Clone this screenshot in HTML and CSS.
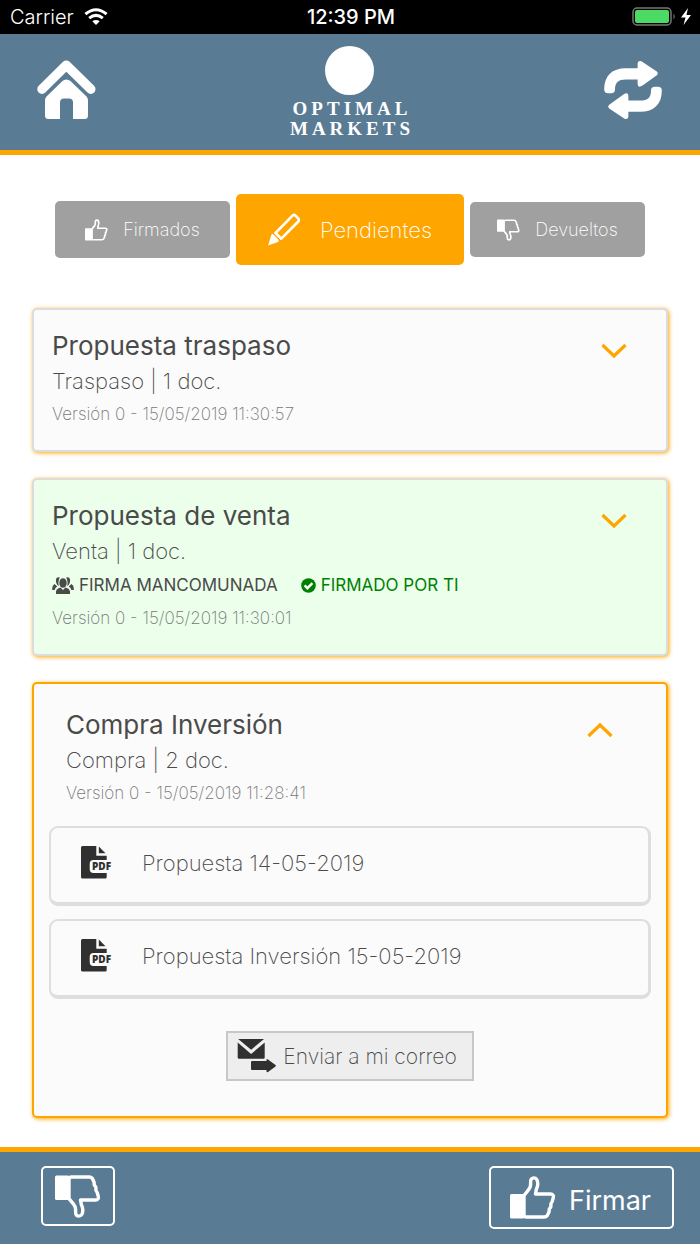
FILE: index.html
```
<!DOCTYPE html>
<html lang="es">
<head>
  <meta charset="UTF-8">
  <meta name="viewport" content="width=device-width, initial-scale=1">
  <title>Optimal Markets</title>
  <link rel="stylesheet" href="styles.css">
</head>
<body>
  <svg class="sprite" aria-hidden="true">
    <symbol id="thumb" viewBox="0 0 46 43">
      <rect x="0" y="18" width="14.5" height="24.5" rx="1.5" fill="currentColor"/>
      <path d="M14 19.5 C16 16.5 19.5 13.5 20.3 10.5 C21 7.5 20.2 5 21 3.5 C22 1.3 25.5 1.3 26.8 3.5 C28.6 7 28 10 26.3 13.5 L25.5 18 H40.5 C43 18 43.9 19.8 43.3 21.5 L42.2 25.5 L41 27.5 L40.8 31 L39.3 33 L39 36 L37.8 38.5 C37.2 40.3 36 41 34 41 H16.5 C15 41 14 40 14 38.5 Z" fill="none" stroke="currentColor" stroke-width="3.4" stroke-linejoin="round"/>
    </symbol>
    <symbol id="chevron" viewBox="0 0 26 16">
      <path d="M1.5 2 L13 13 L24.5 2" fill="none" stroke="currentColor" stroke-width="3.2"/>
    </symbol>
    <symbol id="file" viewBox="0 0 32 33">
      <path d="M1.5 0 H15.3 V9.7 H25.7 V14 H12.5 Q8.7 14 8.7 18 V23 Q8.7 27 12.5 27 H25.7 V31 Q25.7 32.5 24.2 32.5 H1.5 Q0 32.5 0 31 V1.5 Q0 0 1.5 0 Z" fill="currentColor"/>
      <path d="M17.8 0.5 L24.5 7.2 H17.8 Z" fill="currentColor"/>
    </symbol>
  </svg>

  <div class="statusbar">
    <div class="carrier">
      <span>Carrier</span>
      <svg width="24" height="18" viewBox="0 0 24 18" fill="none" stroke="currentColor">
        <path d="M1.4 6.2 Q12 -2.6 22.6 6.2" stroke-width="3"/>
        <path d="M5.2 10.2 Q12 4.6 18.8 10.2" stroke-width="3"/>
        <path d="M12 17 L8.3 13.3 Q12 10.6 15.7 13.3 Z" fill="currentColor" stroke="none"/>
      </svg>
    </div>
    <span class="time">12:39 PM</span>
    <div class="battery">
      <svg width="60" height="20" viewBox="0 0 60 20">
        <rect x="1" y="1" width="38" height="17" rx="4" fill="none" stroke="#777" stroke-width="1.5"/>
        <rect x="3" y="3" width="34" height="13" rx="2" fill="#4cd964"/>
        <path d="M41.5 6.5 Q44 9.5 41.5 12.5 Z" fill="#777"/>
        <path d="M56 1 L49 10.5 H53.5 L51.5 18 L59 8 H54.5 Z" fill="#fff"/>
      </svg>
    </div>
  </div>

  <header class="topbar">
    <button class="icon-btn" aria-label="Inicio">
      <svg width="60" height="60" viewBox="0 0 60 60">
        <path d="M5 29.2 L29.3 5.2 L53.8 29.2" fill="none" stroke="currentColor" stroke-width="9.4" stroke-linecap="round" stroke-linejoin="round"/>
        <path d="M29.3 19.5 Q27 19.5 25.5 21 L9.5 36.5 Q8 38 8 40.5 V55.5 Q8 59 11.5 59 H23 V42.5 Q23 38.5 27 38.5 H32 Q36 38.5 36 42.5 V59 H47.5 Q51 59 51 55.5 V40.5 Q51 38 49.5 36.5 L33.5 21 Q31.8 19.5 29.3 19.5 Z" fill="currentColor"/>
      </svg>
    </button>
    <div class="logo">
      <span class="logo-circle"></span>
      <span class="logo-text">OPTIMAL</span>
      <span class="logo-text">MARKETS</span>
    </div>
    <button class="icon-btn" aria-label="Actualizar">
      <svg width="60" height="60" viewBox="0 0 60.6 61" fill="currentColor">
        <path id="arrow" d="M1 30 C1 16 9 8.3 23 8.3 H35 V4 Q35 1 37.5 1 Q39 1 40 2 L54.5 11.7 Q56.5 13.5 54.5 15.5 L40 26 Q35 29 35 24 V19.7 H23 C15 19.7 12 23 12 30 Q12 33.7 8 33.7 H5 Q1 33.7 1 30 Z"/>
        <use href="#arrow" transform="rotate(180 30.3 30.5)"/>
      </svg>
    </button>
  </header>

  <main>
    <nav class="tabs">
      <button class="tab tab-signed">
        <svg width="23" height="22"><use href="#thumb"/></svg>
        Firmados
      </button>
      <button class="tab tab-active">
        <svg width="32" height="33" viewBox="0 0 32 33">
          <path d="M0 32.5 L3.5 21.5 Q4.5 20.5 5.5 21.5 L10.7 27 Q11.3 28.5 10 29 Z" fill="currentColor"/>
          <path d="M7.5 20 L24.5 2.6 Q26 1.2 27.5 2.6 L30.3 5.5 Q31.6 7 30.3 8.5 L13.3 25.7 Z" fill="none" stroke="currentColor" stroke-width="2.6" stroke-linejoin="round"/>
        </svg>
        Pendientes
      </button>
      <button class="tab tab-returned">
        <svg class="flip" width="23" height="22"><use href="#thumb"/></svg>
        Devueltos
      </button>
    </nav>

    <section class="card">
      <div class="card-head">
        <div>
          <h2>Propuesta traspaso</h2>
          <p class="kind">Traspaso | 1 doc.</p>
          <p class="version">Versión 0 - 15/05/2019 11:30:57</p>
        </div>
        <button class="toggle" aria-label="Abrir"><svg width="26" height="16"><use href="#chevron"/></svg></button>
      </div>
    </section>

    <section class="card card-done">
      <div class="card-head">
        <div>
          <h2>Propuesta de venta</h2>
          <p class="kind">Venta | 1 doc.</p>
          <p class="sign">
            <svg width="22" height="17" viewBox="0 0 22 17" fill="currentColor">
              <ellipse cx="11" cy="6" rx="3.7" ry="4.8"/>
              <path d="M4 17 Q3.3 11.8 7.3 11 L8.5 10.5 L11 13 L13.5 10.5 L14.7 11 Q18.7 11.8 18 17 Z"/>
              <path d="M7.8 0.6 Q4.2 -0.6 3.9 3.5 Q3.8 6 5.4 8 L7 9 Q5.5 5 7.8 0.6 Z"/>
              <path d="M14.2 0.6 Q17.8 -0.6 18.1 3.5 Q18.2 6 16.6 8 L15 9 Q16.5 5 14.2 0.6 Z"/>
              <path d="M2.6 7 L5.2 9.6 Q3 11 2.7 13 H0.3 Q-0.3 8.5 2.6 7 Z"/>
              <path d="M19.4 7 L16.8 9.6 Q19 11 19.3 13 H21.7 Q22.3 8.5 19.4 7 Z"/>
            </svg>
            <span>FIRMA MANCOMUNADA</span>
            <span class="signed">
              <svg width="15" height="15" viewBox="0 0 15 15">
                <circle cx="7.5" cy="7.5" r="7.3" fill="currentColor"/>
                <path d="M3.6 7.4 L6.4 10.2 L11.4 5.2" fill="none" stroke="#fff" stroke-width="2.4"/>
              </svg>
              FIRMADO POR TI
            </span>
          </p>
          <p class="version">Versión 0 - 15/05/2019 11:30:01</p>
        </div>
        <button class="toggle" aria-label="Abrir"><svg width="26" height="16"><use href="#chevron"/></svg></button>
      </div>
    </section>

    <section class="card card-open">
      <div class="card-head">
        <div>
          <h2>Compra Inversión</h2>
          <p class="kind">Compra | 2 doc.</p>
          <p class="version">Versión 0 - 15/05/2019 11:28:41</p>
        </div>
        <button class="toggle" aria-label="Cerrar"><svg class="flip" width="26" height="16"><use href="#chevron"/></svg></button>
      </div>
      <div class="docs">
        <a class="doc" href="#">
          <svg width="32" height="33">
            <use href="#file"/>
            <text x="11" y="24" class="pdf-text">PDF</text>
          </svg>
          Propuesta 14-05-2019
        </a>
        <a class="doc" href="#">
          <svg width="32" height="33">
            <use href="#file"/>
            <text x="11" y="24" class="pdf-text">PDF</text>
          </svg>
          Propuesta Inversión 15-05-2019
        </a>
      </div>
      <button class="mail-btn">
        <svg width="40" height="34" viewBox="0 0 40 34" fill="currentColor">
          <path d="M1.2 0 H27 L14.1 10.8 Z"/>
          <path d="M0.7 3.6 L14.1 15 L27.7 3.6 V18.5 Q27.7 19.8 26.5 19.8 H2 Q0.7 19.8 0.7 18.5 Z"/>
          <path d="M15 22 H29.5 V20.6 Q30 19.6 31 20.4 L38.5 26 Q39.3 26.8 38.5 27.5 L31 33 Q30 33.6 29.5 32.6 V31 H15 Q14 31 14 30 V23 Q14 22 15 22 Z"/>
        </svg>
        Enviar a mi correo
      </button>
    </section>
  </main>

  <footer class="bottombar">
    <button class="reject" aria-label="Devolver">
      <svg class="flip" width="46" height="43"><use href="#thumb"/></svg>
    </button>
    <button class="accept">
      <svg width="46" height="43"><use href="#thumb"/></svg>
      <span>Firmar</span>
    </button>
  </footer>
</body>
</html>
```
FILE: styles.css
```
* {
  box-sizing: border-box;
}
body {
  margin: 0;
  min-height: 100vh;
  display: flex;
  flex-direction: column;
  font-family: Inter, "Liberation Sans", sans-serif;
  background: #fff;
  color: #4a4a4a;
}
h2, p {
  margin: 0;
}
button {
  font-family: inherit;
  color: inherit;
  cursor: pointer;
}
svg {
  display: block;
  flex: none;
}
.sprite {
  position: absolute;
  width: 0;
  height: 0;
}
.flip {
  transform: scaleY(-1);
}

/* status bar */
.statusbar {
  display: grid;
  grid-template-columns: 1fr auto 1fr;
  align-items: center;
  height: 34px;
  padding: 0 8px 0 10px;
  background: #000;
  color: #fff;
  font-size: 20px;
}
.carrier {
  display: flex;
  align-items: center;
  gap: 10px;
  font-weight: 300;
}
.time {
  font-weight: 500;
}
.battery {
  justify-self: end;
}

/* header */
.topbar {
  display: flex;
  justify-content: space-between;
  align-items: center;
  height: 121px;
  padding: 0 37px;
  background: #5a7b94;
  border-bottom: 5px solid #ffa500;
  color: #fff;
}
.icon-btn {
  padding: 0 0 4px;
  border: none;
  background: none;
}
.logo {
  display: flex;
  flex-direction: column;
  align-items: center;
}
.logo-circle {
  width: 49px;
  height: 49px;
  margin-bottom: 4px;
  border-radius: 50%;
  background: #fff;
}
.logo-text {
  padding-left: 4px;
  font-family: "Liberation Serif", serif;
  font-size: 19px;
  font-weight: bold;
  line-height: 20px;
  letter-spacing: 4px;
}

main {
  flex: 1;
  display: flex;
  flex-direction: column;
  gap: 26px;
  padding: 39px 32px 29px;
}

/* tabs */
.tabs {
  display: flex;
  justify-content: center;
  align-items: center;
  gap: 6px;
  margin-bottom: 17px;
}
.tab {
  display: flex;
  justify-content: center;
  align-items: center;
  gap: 15px;
  width: 175px;
  height: 57px;
  padding: 0;
  border: none;
  border-radius: 5px;
  background: #a0a0a0;
  color: #fff;
  font-size: 18px;
  font-weight: 200;
}
.tab-active {
  gap: 20px;
  width: 228px;
  height: 71px;
  background: #ffa500;
  font-size: 22px;
}
.tab-returned {
  height: 55px;
}

/* cards */
.card {
  padding: 18px 18px 20px;
  border: 2px solid #dcdcdc;
  border-radius: 5px;
  background: #fbfbfb;
  box-shadow: 1px 1px 4px #ffa500;
}
.card-done {
  background: #ebffeb;
}
.card-open {
  padding: 23px 15px 35px;
  border-color: #ffa500;
}
.card-head {
  display: flex;
  justify-content: space-between;
  align-items: flex-start;
}
.card-open .card-head {
  padding: 0 17px 17px;
}
.card h2 {
  font-size: 26px;
  font-weight: 400;
  line-height: 36px;
}
.kind {
  font-size: 22px;
  font-weight: 200;
  line-height: 34px;
}
.version {
  font-size: 17px;
  font-weight: 200;
  line-height: 32px;
  color: #777;
}
.sign {
  display: flex;
  align-items: center;
  gap: 5px;
  font-size: 17px;
  line-height: 34px;
}
.signed {
  display: flex;
  align-items: center;
  gap: 5px;
  margin-left: 18px;
  color: #008000;
}
.toggle {
  margin: 15px 21px 0 0;
  padding: 0;
  border: none;
  background: none;
  color: #ffa500;
}
.docs {
  display: flex;
  flex-direction: column;
  gap: 13px;
}
.doc {
  display: flex;
  align-items: center;
  gap: 29px;
  height: 80px;
  padding: 0 30px 5px;
  border: 2px solid #dedede;
  border-right-width: 3px;
  border-bottom-width: 4px;
  border-radius: 9px;
  color: #4a4a4a;
  font-size: 22px;
  font-weight: 200;
  text-decoration: none;
}
.doc svg {
  color: #303030;
}
.pdf-text {
  font-family: "Open Sans", sans-serif;
  font-size: 10px;
  font-weight: 800;
  fill: #303030;
}
.mail-btn {
  display: flex;
  align-items: center;
  gap: 6px;
  height: 50px;
  margin: 32px auto 0;
  padding: 0 15px 0 9px;
  border: 2px solid #c8c8c8;
  background: #eee;
  font-size: 21px;
  font-weight: 200;
}
.mail-btn svg {
  color: #303030;
}

/* footer */
.bottombar {
  display: flex;
  justify-content: space-between;
  align-items: flex-start;
  height: 97px;
  padding: 14px 26px 0 41px;
  background: #5a7b94;
  border-top: 5px solid #ffa500;
  color: #fff;
}
.bottombar button {
  display: flex;
  justify-content: center;
  align-items: center;
  gap: 13px;
  border: 2px solid #fff;
  border-radius: 5px;
  background: none;
}
.reject {
  width: 74px;
  height: 60px;
  padding: 0;
}
.accept {
  height: 63px;
  padding: 0 21px 0 19px;
  font-size: 27px;
}
.accept span {
  padding-top: 6px;
}
```
